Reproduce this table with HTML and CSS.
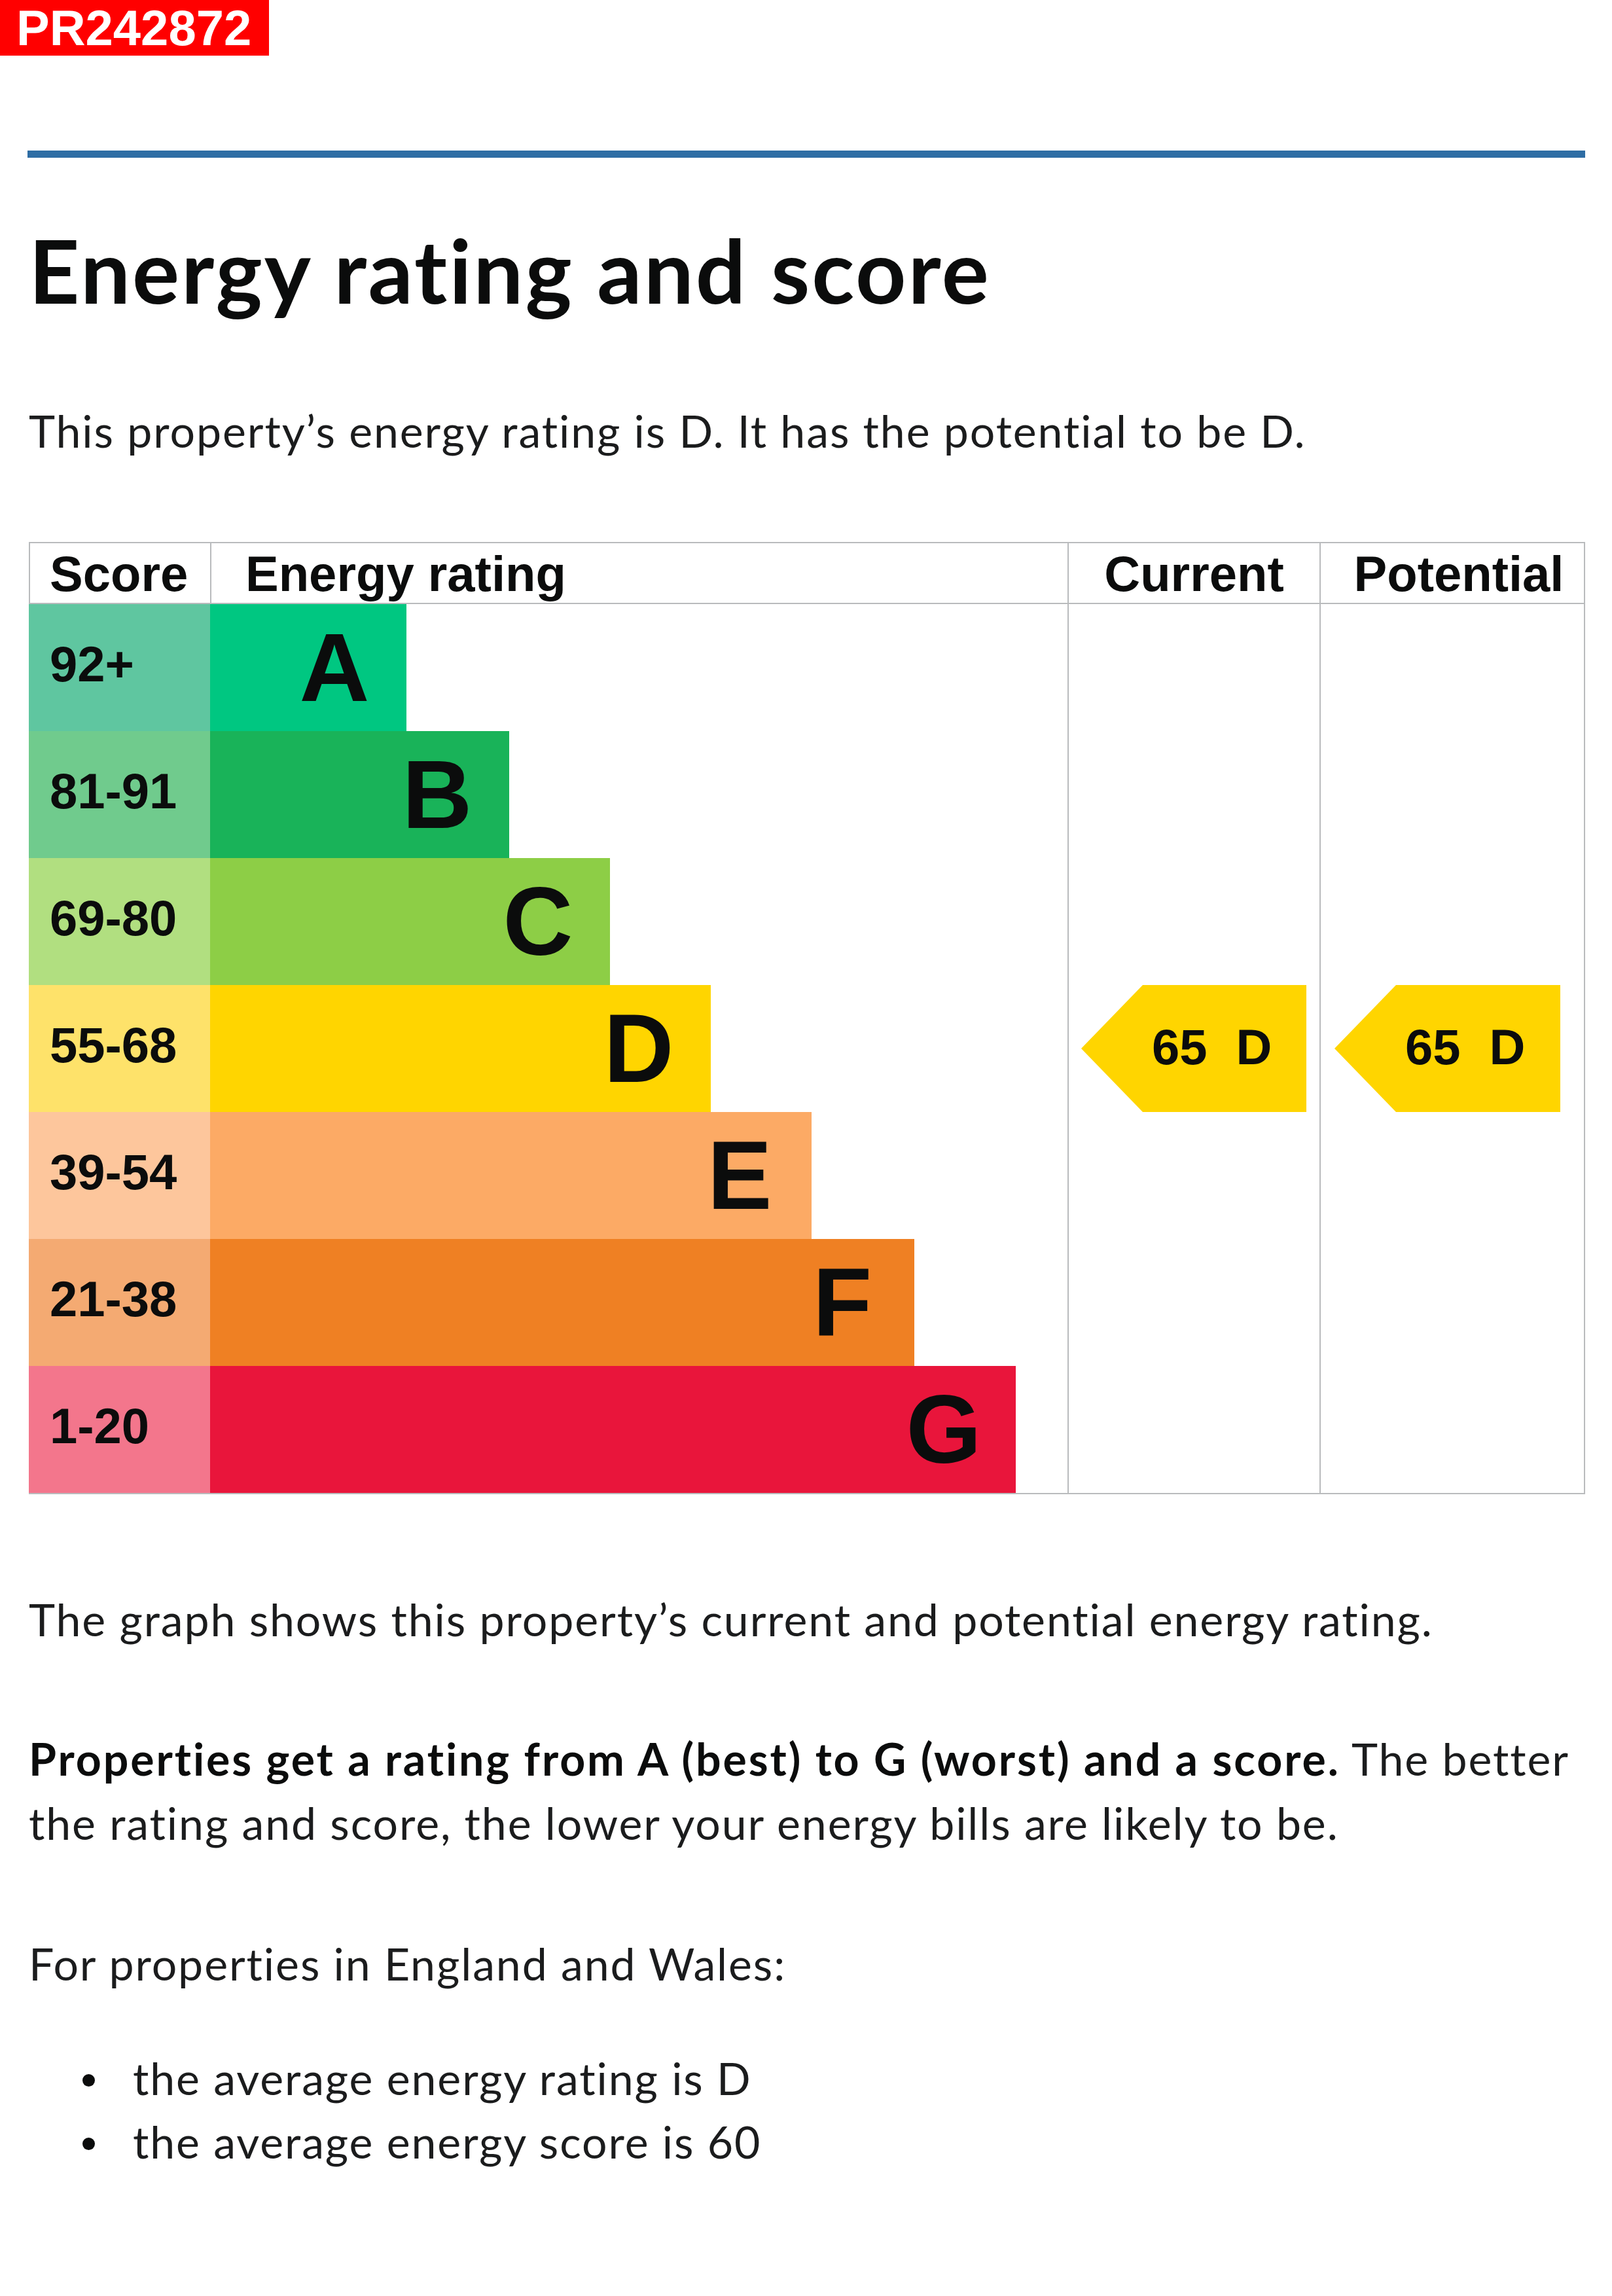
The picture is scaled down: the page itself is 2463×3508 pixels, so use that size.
FILE: index.html
```html
<!DOCTYPE html>
<html lang="en">
<head>
<meta charset="utf-8">
<title>Energy rating and score</title>
<link rel="stylesheet" href="styles.css">
</head>
<body>
<div class="tag">PR242872</div>
<main class="page">
  <hr class="rule">
  <h1 class="title">Energy rating and score</h1>
  <p class="text lead">This property’s energy rating is D. It has the potential to be D.</p>

  <div class="chart">
    <div class="hcell h-score">Score</div>
    <div class="hcell h-rating">Energy rating</div>
    <div class="hcell h-current">Current</div>
    <div class="hcell h-potential">Potential</div>

    <div class="score s-a r1">92+</div>
    <div class="bar-cell r1"><div class="bar b-a"><span class="letter">A</span></div></div>
    <div class="score s-b r2">81-91</div>
    <div class="bar-cell r2"><div class="bar b-b"><span class="letter">B</span></div></div>
    <div class="score s-c r3">69-80</div>
    <div class="bar-cell r3"><div class="bar b-c"><span class="letter">C</span></div></div>
    <div class="score s-d r4">55-68</div>
    <div class="bar-cell r4"><div class="bar b-d"><span class="letter">D</span></div></div>
    <div class="score s-e r5">39-54</div>
    <div class="bar-cell r5"><div class="bar b-e"><span class="letter">E</span></div></div>
    <div class="score s-f r6">21-38</div>
    <div class="bar-cell r6"><div class="bar b-f"><span class="letter">F</span></div></div>
    <div class="score s-g r7">1-20</div>
    <div class="bar-cell r7"><div class="bar b-g"><span class="letter">G</span></div></div>

    <div class="col col-current"></div>
    <div class="col col-potential"></div>

    <div class="marker m-current r4"><span>65</span><span>D</span></div>
    <div class="marker m-potential r4"><span>65</span><span>D</span></div>
  </div>

  <p class="text graph-note">The graph shows this property’s current and potential energy rating.</p>
  <p class="text explain"><strong>Properties get a rating from A (best) to G (worst) and a score.</strong> The better the rating and score, the lower your energy bills are likely to be.</p>
  <p class="text region">For properties in England and Wales:</p>
  <ul class="averages">
    <li>the average energy rating is D</li>
    <li>the average energy score is 60</li>
  </ul>
</main>
</body>
</html>
```

FILE: styles.css
```css
* { box-sizing: border-box; }

body {
  margin: 0;
  background: #ffffff;
  color: #0b0c0c;
  font-family: Lato, "Open Sans", sans-serif;
}

.tag {
  width: 411px;
  height: 85px;
  padding-left: 25px;
  background: #ff0000;
  color: #ffffff;
  font-family: "Liberation Sans", Arial, sans-serif;
  font-weight: bold;
  font-size: 76px;
  line-height: 85px;
}

.page {
  padding: 0 41px 0 44px;
}

.rule {
  margin: 145px 0 0 -2px;
  height: 11px;
  border: 0;
  background: #2e6da4;
}

.title {
  margin: 104px 0 0;
  font-size: 135px;
  line-height: 1;
  font-weight: 700;
  letter-spacing: 2.9px;
}

.text {
  margin: 0;
  font-size: 68px;
  line-height: 98px;
  letter-spacing: 1.9px;
  color: #1b1c1d;
}

.lead { margin-top: 129px; }

.chart {
  margin-top: 121px;
  display: grid;
  grid-template-columns: 277px 1310px 385px 406px;
  grid-template-rows: 93px repeat(7, 194px);
  border-top: 2px solid #b9bbbd;
  border-right: 2px solid #b9bbbd;
  border-bottom: 2px solid #b9bbbd;
  font-family: "Liberation Sans", Arial, sans-serif;
  font-weight: bold;
  color: #0b0c0c;
}

.hcell {
  grid-row: 1;
  display: flex;
  align-items: flex-end;
  padding-bottom: 6px;
  font-size: 76px;
  line-height: 1;
  border-bottom: 2px solid #b9bbbd;
  border-left: 2px solid #b9bbbd;
}
.h-score { grid-column: 1; padding-left: 30px; }
.h-rating { grid-column: 2; padding-left: 52px; }
.h-current { grid-column: 3; justify-content: center; }
.h-potential { grid-column: 4; justify-content: center; padding-left: 18px; }

.r1 { grid-row: 2; }
.r2 { grid-row: 3; }
.r3 { grid-row: 4; }
.r4 { grid-row: 5; }
.r5 { grid-row: 6; }
.r6 { grid-row: 7; }
.r7 { grid-row: 8; }

.score {
  grid-column: 1;
  display: flex;
  align-items: center;
  padding: 0 0 10px 32px;
  font-size: 76px;
  line-height: 1;
}
.s-a { background: #5fc6a0; }
.s-b { background: #70cb8d; }
.s-c { background: #b1df80; }
.s-d { background: #fee26a; }
.s-e { background: #fdc69c; }
.s-f { background: #f4aa72; }
.s-g { background: #f3768c; }

.bar-cell {
  grid-column: 2;
  display: flex;
}
.bar {
  display: flex;
  align-items: center;
  justify-content: flex-end;
  font-size: 148px;
  line-height: 1;
}
.letter {
  width: 220px;
  text-align: center;
}
.b-a { width: 300px; background: #00c781; }
.b-b { width: 457px; background: #19b359; }
.b-c { width: 611px; background: #8dce46; }
.b-d { width: 765px; background: #ffd500; }
.b-e { width: 919px; background: #fcaa65; }
.b-f { width: 1076px; background: #ef8023; }
.b-g { width: 1231px; background: #e9153b; }

.col {
  grid-row: 2 / 9;
  border-left: 2px solid #b9bbbd;
}
.col-current { grid-column: 3; }
.col-potential { grid-column: 4; }

.marker {
  display: flex;
  align-items: center;
  gap: 44px;
  background: #ffd500;
  clip-path: polygon(0 50%, 94px 0, 100% 0, 100% 100%, 94px 100%);
  font-size: 76px;
  line-height: 1;
  padding-left: 108px;
  padding-bottom: 4px;
}
.m-current { grid-column: 3; margin: 0 20px 0 21px; }
.m-potential { grid-column: 4; margin: 0 38px 0 23px; }

.graph-note { margin-top: 142px; }
.explain { margin-top: 115px; }
.explain strong { font-weight: 700; color: #0b0c0c; letter-spacing: 2.9px; }
.region { margin-top: 117px; }

.averages {
  margin: 77px 0 0;
  padding: 0 0 0 82px;
  list-style: none;
  font-size: 68px;
  line-height: 97px;
  letter-spacing: 1.9px;
  color: #1b1c1d;
}
.averages li {
  display: flex;
  align-items: center;
}
.averages li::before {
  content: "";
  flex: none;
  width: 19px;
  height: 19px;
  margin: 8px 58px 0 0;
  border-radius: 50%;
  background: #0b0c0c;
}
```
